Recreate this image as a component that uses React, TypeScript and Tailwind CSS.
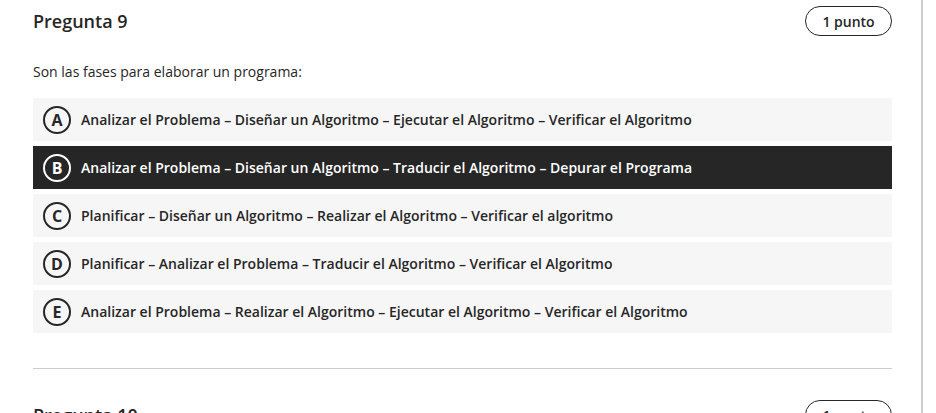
const options = [
    { letter: "A", text: "Analizar el Problema – Diseñar un Algoritmo – Ejecutar el Algoritmo – Verificar el Algoritmo" },
    { letter: "B", text: "Analizar el Problema – Diseñar un Algoritmo – Traducir el Algoritmo – Depurar el Programa", selected: true },
    { letter: "C", text: "Planificar – Diseñar un Algoritmo – Realizar el Algoritmo – Verificar el algoritmo" },
    { letter: "D", text: "Planificar – Analizar el Problema – Traducir el Algoritmo – Verificar el Algoritmo" },
    { letter: "E", text: "Analizar el Problema – Realizar el Algoritmo – Ejecutar el Algoritmo – Verificar el Algoritmo" },
];

function Header({ title }: { title: string }) {
    return (
        <div className="flex items-center justify-between h-[30px]">
            <h2 className="text-[18px] font-semibold text-[#262626] leading-none">{title}</h2>
            <span className="h-[30px] w-[87px] flex items-center justify-center rounded-full border border-[#262626] text-[14px] font-semibold text-[#262626]">
                1 punto
            </span>
        </div>
    );
}

export default function App() {
    return (
        <div className="w-[936px] h-[413px] overflow-hidden bg-white flex" style={{ fontFamily: '"Open Sans", sans-serif' }}>
            <div className="w-[923px] shrink-0 pl-[33px] pr-[29px] pt-[6px] border-r-2 border-[#cccccc]">
                <Header title="Pregunta 9" />

                <p className="mt-[26px] text-[14px] leading-5 text-[#262626]">Son las fases para elaborar un programa:</p>

                <ul className="mt-4 flex flex-col gap-[5px]">
                    {options.map((o) => (
                        <li
                            key={o.letter}
                            className={
                                o.selected
                                    ? "h-[43px] flex items-center pl-[10px] gap-[10px] bg-[#262626] text-white"
                                    : "h-[43px] flex items-center pl-[10px] gap-[10px] bg-[#f6f6f6] text-[#262626]"
                            }
                        >
                            <span
                                className={
                                    o.selected
                                        ? "w-[28px] h-[28px] rounded-full border-2 border-white flex items-center justify-center text-[16px] font-bold leading-none"
                                        : "w-[28px] h-[28px] rounded-full border-2 border-[#262626] flex items-center justify-center text-[16px] font-bold leading-none"
                                }
                            >
                                {o.letter}
                            </span>
                            <span className="text-[14px] font-semibold">{o.text}</span>
                        </li>
                    ))}
                </ul>

                <hr className="mt-[35px] border-t border-[#cccccc]" />

                <div className="mt-[31px]">
                    <Header title="Pregunta 10" />
                </div>
            </div>
        </div>
    );
}
